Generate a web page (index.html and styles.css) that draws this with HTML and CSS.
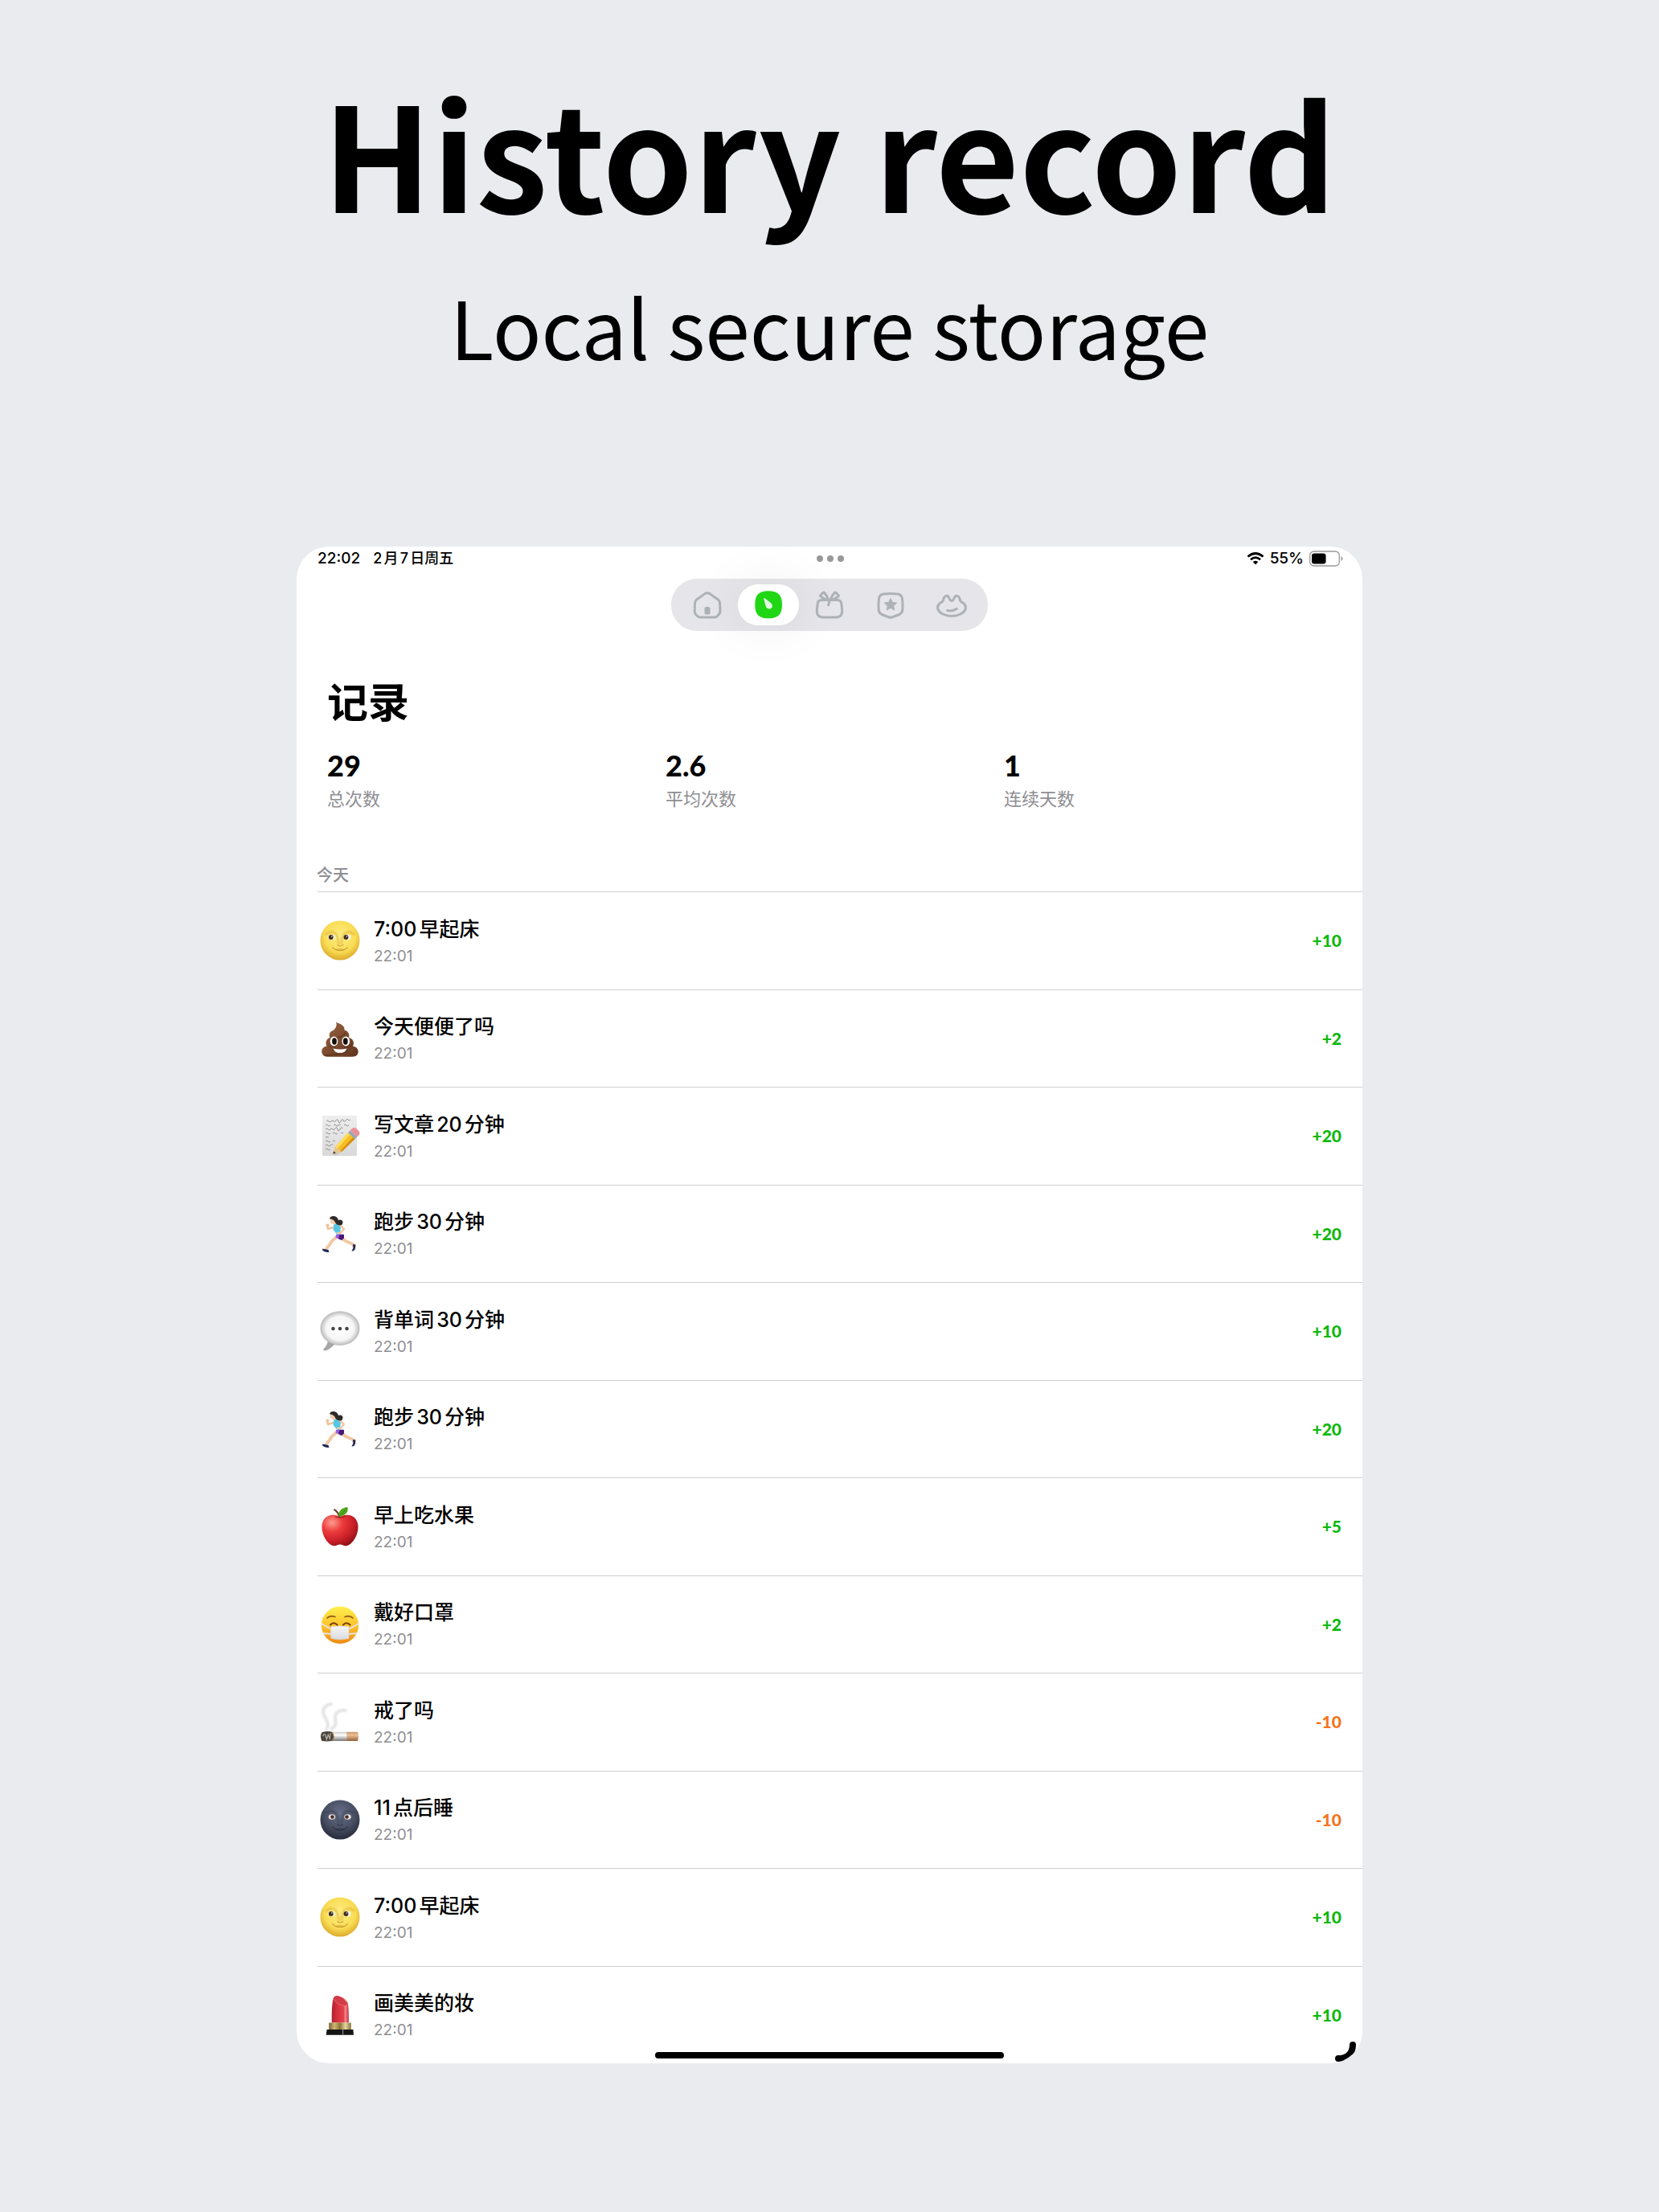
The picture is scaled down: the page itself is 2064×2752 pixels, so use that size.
FILE: index.html
```html
<!DOCTYPE html>
<html lang="zh-CN">
<head>
    <meta charset="UTF-8">
    <meta name="viewport" content="width=device-width, initial-scale=1.0">
    <title>History record</title>
    <link rel="stylesheet" href="styles.css">
</head>
<body>
    <!-- shared drawings -->
    <svg class="sprite" width="0" height="0" aria-hidden="true">
        <defs>
            <radialGradient id="moonFill" cx="0.5" cy="0.4" r="0.6">
                <stop offset="0" stop-color="#fdee86"/>
                <stop offset="0.65" stop-color="#fadd55"/>
                <stop offset="1" stop-color="#dcab2c"/>
            </radialGradient>
            <radialGradient id="darkFill" cx="0.5" cy="0.35" r="0.62">
                <stop offset="0" stop-color="#68708a"/>
                <stop offset="0.6" stop-color="#4a5165"/>
                <stop offset="1" stop-color="#2b3040"/>
            </radialGradient>
            <linearGradient id="poopFill" x1="0" y1="0" x2="1" y2="1">
                <stop offset="0" stop-color="#9a6544"/>
                <stop offset="1" stop-color="#5f341c"/>
            </linearGradient>
            <linearGradient id="paperFill" x1="0" y1="0" x2="0" y2="1">
                <stop offset="0" stop-color="#eeeeee"/>
                <stop offset="1" stop-color="#d9d9d9"/>
            </linearGradient>
            <radialGradient id="bubbleFill" cx="0.5" cy="0.5" r="0.55">
                <stop offset="0" stop-color="#ffffff"/>
                <stop offset="0.65" stop-color="#f6f6f6"/>
                <stop offset="1" stop-color="#a9a9a9"/>
            </radialGradient>
            <radialGradient id="appleFill" cx="0.28" cy="0.25" r="0.85">
                <stop offset="0" stop-color="#ff9d90"/>
                <stop offset="0.35" stop-color="#ec3b3c"/>
                <stop offset="0.7" stop-color="#c91f27"/>
                <stop offset="1" stop-color="#8c0f15"/>
            </radialGradient>
            <linearGradient id="faceFill" x1="0" y1="0" x2="0" y2="1">
                <stop offset="0" stop-color="#fff04f"/>
                <stop offset="0.5" stop-color="#fdc52d"/>
                <stop offset="1" stop-color="#ef8a12"/>
            </linearGradient>
            <linearGradient id="maskFill" x1="0" y1="0" x2="0" y2="1">
                <stop offset="0" stop-color="#f6f6f6"/>
                <stop offset="1" stop-color="#dcdce0"/>
            </linearGradient>
            <linearGradient id="cigFill" x1="0" y1="0" x2="0" y2="1">
                <stop offset="0" stop-color="#c9c9c9"/>
                <stop offset="0.35" stop-color="#ffffff"/>
                <stop offset="1" stop-color="#777777"/>
            </linearGradient>
            <linearGradient id="filterFill" x1="0" y1="0" x2="0" y2="1">
                <stop offset="0" stop-color="#c89566"/>
                <stop offset="0.35" stop-color="#ebc096"/>
                <stop offset="1" stop-color="#956137"/>
            </linearGradient>
            <linearGradient id="lipFill" x1="0" y1="0" x2="1" y2="0">
                <stop offset="0" stop-color="#b3202f"/>
                <stop offset="0.35" stop-color="#d6303e"/>
                <stop offset="0.7" stop-color="#e5424d"/>
                <stop offset="0.8" stop-color="#f58a8e"/>
                <stop offset="1" stop-color="#c52b39"/>
            </linearGradient>
            <linearGradient id="goldFill" x1="0" y1="0" x2="1" y2="0">
                <stop offset="0" stop-color="#7a6230"/>
                <stop offset="0.25" stop-color="#cdb774"/>
                <stop offset="0.5" stop-color="#8d7336"/>
                <stop offset="0.75" stop-color="#e6d79f"/>
                <stop offset="1" stop-color="#86703b"/>
            </linearGradient>
            <filter id="soft" x="-30%" y="-30%" width="160%" height="160%">
                <feGaussianBlur stdDeviation="1"/>
            </filter>
        </defs>

        <symbol id="moonFace" viewBox="0 0 50 50">
            <path d="M7 18Q13 12 19 16Q23 19 23 30M43 18Q37 12 31 16Q27 19 27 30" fill="none" stroke="#d3a12b" stroke-width="2" opacity="0.6" filter="url(#soft)"/>
            <ellipse cx="14.5" cy="21" rx="4.4" ry="3.2" fill="#fff"/>
            <ellipse cx="34" cy="21" rx="4.4" ry="3.2" fill="#fff"/>
            <path d="M22 30Q22 32.5 24 31.5Q25 33 26.500 31.5Q28.5 32.5 28.5 30" fill="none" stroke="#b98a24" stroke-width="0.8"/>
            <path d="M15 34Q17 33 18 36Q25 39.5 32 36Q33 33 35 34" fill="none" stroke="#b98a24" stroke-width="0.9"/>
            <path d="M19 36.5Q25 35 31 36.5" fill="none" stroke="#c58d30" stroke-width="0.8"/>
        </symbol>

        <symbol id="moon" viewBox="0 0 50 50">
            <circle cx="25" cy="25" r="24.5" fill="url(#moonFill)"/>
            <use href="#moonFace"/>
            <circle cx="13.8" cy="21" r="3" fill="#42301b"/>
            <circle cx="32.5" cy="21" r="3" fill="#42301b"/>
            <circle cx="14.8" cy="20" r="0.8" fill="#fff"/>
            <circle cx="33.5" cy="20" r="0.8" fill="#fff"/>
        </symbol>

        <symbol id="darkMoon" viewBox="0 0 50 50">
            <circle cx="25" cy="25" r="24.5" fill="url(#darkFill)"/>
            <path d="M7 17Q13 11 19 16Q23 19 23 30M43 17Q37 11 31 16Q27 19 27 30" fill="none" stroke="#2b3040" stroke-width="2" opacity="0.5" filter="url(#soft)"/>
            <ellipse cx="15" cy="21.5" rx="4.2" ry="3.2" fill="#e9e4e2"/>
            <ellipse cx="34.5" cy="21.5" rx="4.2" ry="3.2" fill="#e9e4e2"/>
            <circle cx="15.5" cy="21.5" r="2.3" fill="#4b2b20"/>
            <circle cx="33.5" cy="21.5" r="2.3" fill="#4b2b20"/>
            <path d="M21.5 30.5Q22 32.5 24 31.8Q25 33 26.5 31.8Q28.5 32.5 28.5 30.5" fill="none" stroke="#252a38" stroke-width="0.9"/>
            <path d="M15 34Q17 33.5 18 36Q25 41 32 36Q33 33.5 35 34M19 37Q25 35.5 31 37" fill="none" stroke="#252a38" stroke-width="0.9"/>
        </symbol>

        <symbol id="poop" viewBox="0 0 50 50">
            <path d="M20 4.8C23 6 31.5 8.5 30.5 14.5C35 15.5 37.5 20 36 24C41 25 43.5 30 41 34.5C46 35.5 48.500 39 47.5 43C46.5 47 43 47.8 39 47.8H10C5 47.8 2.3 45 2.3 41C2.3 37.5 5 35 8.5 34.5C6 30 8.5 25 12.5 24C11 20.5 12 16.5 15.5 15.5C19 14 22 9 20 4.8Z" fill="url(#poopFill)"/>
            <path d="M15 23.5Q26 26 32 18M11 34Q14 36 20 35M30 36Q38 35 41 32M6 46Q20 46 34 41" fill="none" stroke="#522b16" stroke-width="1.4" opacity="0.6"/>
            <ellipse cx="17.5" cy="28.5" rx="4.8" ry="6" fill="#fff"/>
            <ellipse cx="32.3" cy="28.5" rx="4.8" ry="6" fill="#fff"/>
            <ellipse cx="18" cy="28.5" rx="2.9" ry="4.2" fill="#16100d"/>
            <ellipse cx="31.8" cy="28.5" rx="2.9" ry="4.2" fill="#16100d"/>
            <path d="M16.5 37.5Q25 39.5 33.5 37.5Q31.5 43 25 43Q18.5 43 16.5 37.5Z" fill="#fff"/>
        </symbol>

        <symbol id="memo" viewBox="0 0 50 50">
            <path d="M3 0H46V50H3Z" fill="url(#paperFill)"/>
            <path d="M8 7q2-2 3 0t3 0t3 0t3-1t3 1t3 0t3-1t3 0t3-1t3 0M7 12q2-2 3 0t3 0M17 12q2-2 3 0t3 0t3 0M30 12q2-2 3 0t3 0M7 17q2-2 3 0t3 0t3 0t3-1t3 1t3 0t3-1M7 22q2-2 3 0t3 0M16 22q2-2 3 0t3 0M26 22q2-2 3 0M7 27q2-1 4 0M7 32q2-2 3 0t3 0M16 32q2-2 3 0M7 37q2-2 3 0t3 0t3-1M7 42q2-2 3 0t3 0" fill="none" stroke="#777" stroke-width="0.8"/>
            <path d="M18 49L47 24L49 20" fill="none" stroke="#888" stroke-width="2" opacity="0.5" filter="url(#soft)"/>
            <path d="M16.3 47.5L19 39L35 21L43.5 29L27 45Z" fill="#f6bd22"/>
            <path d="M19 39L35 21L37.5 23.5L21 42Z" fill="#ffdc58"/>
            <path d="M24.5 45L41 27L43.5 29L27 45Z" fill="#d68f12"/>
            <path d="M16.3 47.5L19 39L22 41L24 42L27 45Z" fill="#e9c592"/>
            <path d="M16.3 47.5L17.3 44.3L19.8 46.6Z" fill="#333"/>
            <path d="M35 21L37.5 18.5L46 26.5L43.5 29Z" fill="#8fa9bd"/>
            <path d="M37.5 18.5L40 16Q43 13.5 46.5 17Q50.5 21 48.5 24L46 26.5Z" fill="#ec8f98"/>
        </symbol>

        <symbol id="runner" viewBox="0 0 50 50">
            <path d="M22 28L15 34Q12 39 7 45M25 29L32 34L41 38L43 42" fill="none" stroke="#f1c9a5" stroke-width="4" stroke-linecap="round" stroke-linejoin="round"/>
            <path d="M17 17L10 19L9 14" fill="none" stroke="#efc39e" stroke-width="2.6" stroke-linecap="round" stroke-linejoin="round"/>
            <circle cx="9.5" cy="14.5" r="2" fill="#efc39e"/>
            <path d="M17.5 13Q22 11 26.5 14.5Q25 20 25.5 26Q22 28 20.5 25Q18 21 16.5 20Z" fill="#54c7e4"/>
            <path d="M25 14.5L30 19L25.5 24L22 24" fill="none" stroke="#f1c9a5" stroke-width="2.6" stroke-linecap="round" stroke-linejoin="round"/>
            <path d="M12.5 5Q18 3 20.5 9L20 13L16 13Q12 12 12.5 5Z" fill="#f4cfae"/>
            <path d="M12 6Q13 2.5 18 3Q22 4 23 8Q27 6.5 28.5 10Q28.5 14.5 25 14.5Q20.5 14 19 11Q18.5 7.5 12 6Z" fill="#2e2a29"/>
            <path d="M20 26L29 25.5L30 30L26.5 33L19.5 29.5Z" fill="#9a5be6"/>
            <path d="M24.5 26H30V30.5L27 33L23 31Z" fill="#491a74"/>
            <path d="M3 43.5L10.5 45L11.5 47.5Q9 49 3.5 46Z" fill="#1c2857"/>
            <path d="M41 38L44.5 38.5L43.5 44.5Q42 47 39.5 46.5L41.5 42.5Z" fill="#1c2857"/>
        </symbol>

        <symbol id="bubble" viewBox="0 0 50 51">
            <path d="M10 36Q9 44 4 48.5Q3.5 50.5 6 50.5Q12 49 18.5 42Z" fill="#a6a6a6"/>
            <path d="M25 0.7C39 0.7 49.6 10 49.6 22C49.6 34 39 43.3 25 43.3C11 43.3 0.4 34 0.4 22C0.4 10 11 0.7 25 0.7Z" fill="url(#bubbleFill)" stroke="#b5b5b5" stroke-width="0.6"/>
            <circle cx="16.3" cy="22.5" r="2.3" fill="#444"/>
            <circle cx="25" cy="22.5" r="2.3" fill="#444"/>
            <circle cx="33.7" cy="22.5" r="2.3" fill="#444"/>
        </symbol>

        <symbol id="apple" viewBox="0 0 50 51">
            <path d="M25 13Q30 10.5 35 11C43 11.5 48 18 48 26C48 37 41 48 34 50C30 51 28 48.5 25 48.5C22 48.5 20 51 16 50C9 48 2 37 2 26C2 18 7 11.5 15 11Q20 10.5 25 13Z" fill="url(#appleFill)"/>
            <path d="M19 13Q25 16 32 12.5" fill="none" stroke="#8d161c" stroke-width="1.5" opacity="0.6"/>
            <path d="M24.5 14Q23 7.5 18 4.5" fill="none" stroke="#6b3b22" stroke-width="2.2" stroke-linecap="round"/>
            <path d="M23.5 13Q22 3 34.5 1Q37 11 23.5 13Z" fill="#52a91f"/>
            <path d="M24 12.5Q30 8 34 2" fill="none" stroke="#2f7d11" stroke-width="0.8"/>
        </symbol>

        <symbol id="mask" viewBox="0 0 50 50">
            <circle cx="25" cy="25.8" r="23.2" fill="url(#faceFill)"/>
            <path d="M9 17Q13 13.5 19 15.5M31 15.5Q37 13.5 41 17" fill="none" stroke="#9a6415" stroke-width="1.8" stroke-linecap="round"/>
            <path d="M13 25.5Q17 21 21.5 25.5M29 25.5Q33 21 37.5 25.5" fill="none" stroke="#75420a" stroke-width="2.2" stroke-linecap="round"/>
            <path d="M2 24L14 31M48 24L36 31M4 36L14 37M46 36L36 37" fill="none" stroke="#e6e4e3" stroke-width="2"/>
            <path d="M14 27.5Q25 26.5 36 27.5V42.5Q25 45 14 42.5Q12.7 36 14 27.5Z" fill="url(#maskFill)" stroke="#d2d2d5" stroke-width="0.6"/>
        </symbol>

        <symbol id="cigarette" viewBox="0 0 50 51">
            <path d="M14 3C4 5 2 11 5 18C8 24 12 28 8 35M32 11C22 11 18 15 19 21C20 28 20 31 14 35" fill="none" stroke="#dadada" stroke-width="4" opacity="0.75" stroke-linecap="round" filter="url(#soft)"/>
            <path d="M14 38.5H34V50H14Z" fill="url(#cigFill)"/>
            <path d="M33.5 38.5H47.5Q49.3 44 47.5 50H33.5Z" fill="url(#filterFill)"/>
            <path d="M2 39Q9 37 15 38.5Q20 44 15 50Q8 51 2 50Q-1 44 2 39Z" fill="#4a443d"/>
            <path d="M6 41l2 7l2-6l2 5l1-7M3 44l2-3" fill="none" stroke="#b6b0a8" stroke-width="1.3"/>
            <path d="M14.5 39Q19 44 14.5 49.5" fill="none" stroke="#b27d28" stroke-width="1"/>
        </symbol>

        <symbol id="lipstick" viewBox="0 0 50 52">
            <path d="M16.5 4Q18 0.5 22 1Q31 3 34.5 9Q36.5 12 36.3 36H14.3Q14 12 16.5 4Z" fill="url(#lipFill)"/>
            <path d="M17 4.5Q19 0.5 24 2.5Q33 6 34.5 12Q33.5 15 28 13Q18.5 9.5 17 4.5Z" fill="#d23c49"/>
            <path d="M17 5.5Q20 11.5 28 13.3Q33 15 34.7 12" fill="none" stroke="#f0777d" stroke-width="0.8"/>
            <path d="M10.7 36H39.3V44.7H10.7Z" fill="url(#goldFill)"/>
            <path d="M8 44.7H42L42.7 51.7H7Z" fill="#141414"/>
            <path d="M28 44.7H29.5V51.7H28Z" fill="#777"/>
        </symbol>
    </svg>

    <main class="page">
        <h1>History record</h1>
        <p class="subtitle">Local secure storage</p>

        <section class="device">
            <div class="status-bar">
                <div class="status-left">
                    <span>22:02</span>
                    <span class="date">2月7日周五</span>
                </div>
                <div class="dots"><i></i><i></i><i></i></div>
                <div class="status-right">
                    <svg width="22" height="16" viewBox="0 0 22 16">
                        <path d="M1.5 5.5Q11-2.500 20.5 5.5M5 9.2Q11 4 17 9.2" fill="none" stroke="#000" stroke-width="2.8"/>
                        <path d="M7.8 12Q11 9.3 14.2 12L11 15.500Z"/>
                    </svg>
                    <span>55%</span>
                    <svg width="42" height="20" viewBox="0 0 42 20">
                        <rect x="0.7" y="1" width="36.6" height="18" rx="5" fill="none" stroke="#999" stroke-width="1.3"/>
                        <rect x="3" y="3.5" width="17.5" height="13" rx="3"/>
                        <path d="M39.5 7Q41.5 8 41.5 10T39.5 13Z" fill="#999"/>
                    </svg>
                </div>
            </div>

            <nav class="tabs">
                <a href="#home" aria-label="首页">
                    <svg viewBox="0 0 40 40">
                        <path class="line" d="M17 5.6Q20 3.7 23 5.6L33.3 13Q35.5 14.6 35.6 17.5L36 26.5Q36 30 34 31.8L32 33.8Q30.6 35 28.6 35H11.4Q9.4 35 8 33.8L6 31.8Q4 30 4.2 26.5L4.5 17.5Q4.6 14.6 6.7 13Z"/>
                        <rect class="solid" x="16.5" y="22" width="7" height="9.5" rx="2"/>
                    </svg>
                </a>
                <a href="#record" class="active" aria-label="记录">
                    <svg viewBox="0 0 40 40">
                        <path d="M20 2.3C32 2.3 37 7 37 19.3S32 36.3 20 36.3S3.3 31.5 3.3 19.3S8 2.3 20 2.3Z" fill="#20d615"/>
                        <path d="M14.3 12.2Q14.3 10.8 15.8 11.6L23.3 17.2Q26 20 24.3 23Q21.5 26 18 23.3Q17 22.5 16.5 20.5Z" fill="#e4f9e2"/>
                    </svg>
                </a>
                <a href="#gift" aria-label="奖励">
                    <svg viewBox="0 0 40 40">
                        <path class="line" d="M11 13.5H29Q34.5 13.5 34.8 18L35.7 26Q36 35 28 35H12Q4 35 4.3 26L5.2 18Q5.5 13.5 11 13.5Z"/>
                        <path class="line" d="M18.5 13.5Q16.5 7 13 4Q10.5 5 8.5 8.2Q12 12 18.5 13.5ZM21 13.5Q23.5 7 27 4Q29.5 5 31.5 8.2Q28 12 21 13.5ZM20 13.5Q20 17 18.5 19.8"/>
                    </svg>
                </a>
                <a href="#badge" aria-label="勋章">
                    <svg viewBox="0 0 40 40">
                        <path class="line" d="M10 6.2Q20 5 30 6.2Q33.5 7 34.3 11Q35.5 18 34.8 26Q34.5 29.5 31 31.5Q26 33.5 20 35.5Q14 33.5 9 31.5Q5.5 29.5 5.2 26Q4.5 18 5.7 11Q6.5 7 10 6.2Z"/>
                        <path class="solid" d="M20 11.5L22.3 16.4L27.7 17L23.7 20.7L24.8 26L20 23.3L15.2 26L16.3 20.7L12.3 17L17.7 16.4Z" stroke="#adb2b6" stroke-linejoin="round"/>
                    </svg>
                </a>
                <a href="#me" aria-label="我的">
                    <svg viewBox="0 0 40 40">
                        <path class="line" d="M9.5 14Q10.500 8.3 14 8.3Q16 8.3 17.3 12Q18.3 14.5 20 14.5T22.7 12Q24 8.3 26 8.3Q29.5 8.3 30.5 14Q31 15.5 34 17Q37.5 19.5 37.5 23Q37 28 31 31Q26 33.5 20 33.5T9 31Q3 28 2.5 23Q2.5 19.5 6 17Q9 15.5 9.5 14Z"/>
                        <path class="line" d="M14.5 26.5Q21 28 26.5 24.3"/>
                    </svg>
                </a>
            </nav>

            <h2>记录</h2>
            <dl class="stats">
                <div><dd>29</dd><dt>总次数</dt></div>
                <div><dd>2.6</dd><dt>平均次数</dt></div>
                <div><dd>1</dd><dt>连续天数</dt></div>
            </dl>

            <h3>今天</h3>
            <ul class="records">
                <li>
                    <svg class="emoji"><use href="#moon"/></svg>
                    <div class="info"><p>7:00早起床</p><time>22:01</time></div>
                    <span class="score">+10</span>
                </li>
                <li>
                    <svg class="emoji"><use href="#poop"/></svg>
                    <div class="info"><p>今天便便了吗</p><time>22:01</time></div>
                    <span class="score">+2</span>
                </li>
                <li>
                    <svg class="emoji"><use href="#memo"/></svg>
                    <div class="info"><p>写文章20分钟</p><time>22:01</time></div>
                    <span class="score">+20</span>
                </li>
                <li>
                    <svg class="emoji"><use href="#runner"/></svg>
                    <div class="info"><p>跑步30分钟</p><time>22:01</time></div>
                    <span class="score">+20</span>
                </li>
                <li>
                    <svg class="emoji"><use href="#bubble"/></svg>
                    <div class="info"><p>背单词30分钟</p><time>22:01</time></div>
                    <span class="score">+10</span>
                </li>
                <li>
                    <svg class="emoji"><use href="#runner"/></svg>
                    <div class="info"><p>跑步30分钟</p><time>22:01</time></div>
                    <span class="score">+20</span>
                </li>
                <li>
                    <svg class="emoji"><use href="#apple"/></svg>
                    <div class="info"><p>早上吃水果</p><time>22:01</time></div>
                    <span class="score">+5</span>
                </li>
                <li>
                    <svg class="emoji"><use href="#mask"/></svg>
                    <div class="info"><p>戴好口罩</p><time>22:01</time></div>
                    <span class="score">+2</span>
                </li>
                <li>
                    <svg class="emoji"><use href="#cigarette"/></svg>
                    <div class="info"><p>戒了吗</p><time>22:01</time></div>
                    <span class="score minus">-10</span>
                </li>
                <li>
                    <svg class="emoji"><use href="#darkMoon"/></svg>
                    <div class="info"><p>11点后睡</p><time>22:01</time></div>
                    <span class="score minus">-10</span>
                </li>
                <li>
                    <svg class="emoji"><use href="#moon"/></svg>
                    <div class="info"><p>7:00早起床</p><time>22:01</time></div>
                    <span class="score">+10</span>
                </li>
                <li>
                    <svg class="emoji"><use href="#lipstick"/></svg>
                    <div class="info"><p>画美美的妆</p><time>22:01</time></div>
                    <span class="score">+10</span>
                </li>
            </ul>

            <div class="home-bar"></div>
            <svg class="corner" width="26" height="26" viewBox="0 0 26 26">
                <path d="M22 4Q21.5 21 4 21" fill="none" stroke="#000" stroke-width="8" stroke-linecap="round"/>
            </svg>
        </section>
    </main>
</body>
</html>
```

FILE: styles.css
```css
* {
    box-sizing: border-box;
    margin: 0;
    padding: 0;
}
body {
    font-family: Inter, "Noto Sans CJK SC", sans-serif;
    background-color: #e9ebef;
    color: #000;
    text-autospace: normal;
}
.sprite {
    position: absolute;
}
.page {
    padding: 87px 369px 185px;
}
h1,
.subtitle {
    font-family: "Noto Sans CJK SC", sans-serif;
    text-align: center;
    white-space: nowrap;
}
h1 {
    font-size: 180px;
    line-height: 200px;
    font-weight: 700;
}
.subtitle {
    margin-top: 48px;
    font-size: 100px;
    line-height: 140px;
}

/* tablet screen */
.device {
    position: relative;
    display: flex;
    flex-direction: column;
    margin-top: 205px;
    aspect-ratio: 1326 / 1887;
    background-color: #fff;
    border-radius: 40px;
    overflow: hidden;
}
.status-bar {
    display: grid;
    grid-template-columns: 1fr auto 1fr;
    align-items: center;
    height: 28px;
    padding: 0 24px 0 26px;
    font-size: 19px;
    line-height: 30px;
    font-weight: 500;
}
.status-left {
    display: flex;
    gap: 16px;
}
.date {
    font-size: 18px;
}
.status-right {
    display: flex;
    align-items: center;
    justify-content: flex-end;
    gap: 7px;
}
.dots {
    display: flex;
    gap: 5px;
}
.dots i {
    width: 8px;
    height: 8px;
    border-radius: 50%;
    background-color: #999;
}

.tabs {
    display: flex;
    align-self: center;
    margin-top: 12px;
    padding: 7px;
    background-color: #e5e5ea;
    border-radius: 32px;
}
.tabs a {
    display: flex;
    align-items: center;
    justify-content: center;
    width: 76px;
    height: 51px;
    border-radius: 25px;
}
.tabs a.active {
    background-color: #fff;
    box-shadow: 0 0 60px 8px rgba(0, 0, 0, 0.05);
}
.tabs svg {
    width: 40px;
    height: 40px;
}
.line {
    fill: none;
    stroke: #adb2b6;
    stroke-width: 3;
    stroke-linecap: round;
    stroke-linejoin: round;
}
.solid {
    fill: #adb2b6;
}

h2 {
    margin-top: 60px;
    padding: 0 38px;
    font-size: 51px;
    line-height: 60px;
}
.stats {
    display: grid;
    grid-template-columns: repeat(3, 1fr);
    margin-top: 27px;
    padding: 0 25px 0 38px;
}
.stats div {
    display: flex;
    flex-direction: column;
    gap: 6px;
}
.stats dd {
    font-family: Lato, sans-serif;
    font-size: 36px;
    line-height: 40px;
    font-weight: 900;
}
.stats dt {
    font-size: 22px;
    line-height: 32px;
    color: #8e8e93;
}

h3 {
    margin-top: 63px;
    padding: 0 25px 4px;
    font-size: 20px;
    line-height: 32px;
    font-weight: 500;
    color: #8e8e93;
}
.records {
    flex: 1;
    display: grid;
    grid-auto-rows: 1fr;
    padding-left: 26px;
    list-style: none;
}
.records li {
    display: flex;
    align-items: center;
    padding: 0 26px 0 3px;
    border-top: 1px solid #cfcfd1;
}
.emoji {
    width: 50px;
    height: 50px;
    margin-right: 17px;
}
.info {
    flex: 1;
    padding-top: 3px;
}
.info p {
    font-size: 25px;
    line-height: 36px;
    font-weight: 500;
}
.info time {
    display: block;
    font-size: 19px;
    line-height: 32px;
    color: #8e8e93;
}
.score {
    font-family: Lato, sans-serif;
    font-size: 21px;
    line-height: 24px;
    font-weight: 900;
    color: #0db80d;
}
.score.minus {
    color: #f5731b;
}

.home-bar {
    position: absolute;
    left: 50%;
    bottom: 6px;
    width: 434px;
    height: 8px;
    margin-left: -217px;
    border-radius: 4px;
    background-color: #000;
}
.corner {
    position: absolute;
    right: 8px;
    bottom: 1px;
}
```
